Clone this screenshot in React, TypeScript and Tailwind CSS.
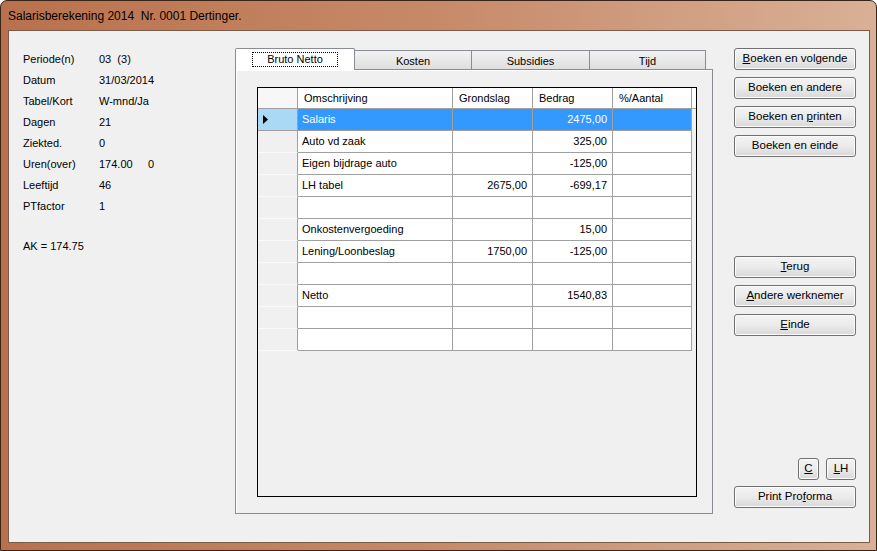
import React from "react";

const font = { fontFamily: '"Liberation Sans", Arial, sans-serif' };

const info: [string, string][] = [
  ["Periode(n)", "03  (3)"],
  ["Datum", "31/03/2014"],
  ["Tabel/Kort", "W-mnd/Ja"],
  ["Dagen", "21"],
  ["Ziekted.", "0"],
  ["Uren(over)", "174.00     0"],
  ["Leeftijd", "46"],
  ["PTfactor", "1"],
];

const rows: [string, string, string, string][] = [
  ["Salaris", "", "2475,00", ""],
  ["Auto vd zaak", "", "325,00", ""],
  ["Eigen bijdrage auto", "", "-125,00", ""],
  ["LH tabel", "2675,00", "-699,17", ""],
  ["", "", "", ""],
  ["Onkostenvergoeding", "", "15,00", ""],
  ["Lening/Loonbeslag", "1750,00", "-125,00", ""],
  ["", "", "", ""],
  ["Netto", "", "1540,83", ""],
  ["", "", "", ""],
  ["", "", "", ""],
];

function Btn({ children, className = "" }: { children: React.ReactNode; className?: string }) {
  return (
    <div
      className={`h-[22px] flex items-center justify-center rounded-[3px] border border-[#707070] bg-gradient-to-b from-[#f3f3f3] via-[#ebebeb] to-[#d8d8d8] text-[11.5px] text-black shadow-[inset_0_0_0_1px_#fcfcfc] ${className}`}
    >
      {children}
    </div>
  );
}

export default function App() {
  return (
    <div
      className="w-[877px] h-[551px] overflow-hidden bg-gradient-to-r from-[#b9714d] via-[#c68a68] to-[#d9b096] rounded-t-[7px] border border-[#3a2418] flex flex-col"
      style={font}
    >
      {/* title bar */}
      <div className="h-[29px] flex items-center pl-[7px] pt-[1px] text-[12px] text-black">
        Salarisberekening 2014&nbsp; Nr. 0001 Dertinger.
      </div>

      {/* client area */}
      <div className="ml-[7px] mr-[6px] h-[513px] bg-[#f0f0f0] border border-[#7a5a48] flex text-[11px] text-black">
        {/* left info */}
        <div className="w-[226px] pl-[14px] pt-[18px]">
          {info.map(([k, v]) => (
            <div key={k} className="flex h-[21px] items-center">
              <span className="w-[76px]">{k}</span>
              <span className="whitespace-pre">{v}</span>
            </div>
          ))}
          <div className="mt-[19px] h-[21px] flex items-center">AK = 174.75</div>
        </div>

        {/* tab control */}
        <div className="w-[478px] shrink-0 pt-[17px] flex flex-col">
          <div className="flex items-end h-[22px]">
            <div className="w-[120px] h-[22px] bg-white border border-b-0 border-[#898c95] rounded-t-[2px] relative z-10 flex items-start justify-center pt-[3px]">
              <span className="px-[14px] border border-dotted border-black leading-[13px]">Bruto Netto</span>
            </div>
            {["Kosten", "Subsidies", "Tijd"].map((t, i) => (
              <div
                key={t}
                className={`h-[20px] ${i === 0 ? "w-[117px]" : i === 1 ? "w-[118px]" : "w-[116px]"} border border-b-0 border-l-0 border-[#898c95] bg-gradient-to-b from-[#f2f2f2] to-[#dedede] flex items-center justify-center pt-[1px]`}
              >
                {t}
              </div>
            ))}
          </div>
          <div className="-mt-[1px] h-[445px] border border-[#898c95] bg-[#f0f0f0] shadow-[inset_1px_1px_0_#ffffff] pl-[21px] pt-[17px]">
            {/* grid */}
            <div className="w-[440px] h-[410px] border border-black bg-[#f0f0f0]">
              <div className="flex h-[21px] bg-white border-b border-[#a0a0a0]">
                <div className="w-[40px] border-r border-[#a0a0a0] bg-[#f7f7f7]" />
                {[
                  ["Omschrijving", "w-[155px]"],
                  ["Grondslag", "w-[80px]"],
                  ["Bedrag", "w-[80px]"],
                  ["%/Aantal", "w-[79px]"],
                ].map(([h, w]) => (
                  <div key={h} className={`${w} border-r border-[#a0a0a0] flex items-center pl-[6px]`}>
                    {h}
                  </div>
                ))}
              </div>
              {rows.map((r, i) => {
                const sel = i === 0;
                return (
                  <div key={i} className="flex h-[22px]">
                    <div
                      className={`w-[40px] border-r border-b border-[#a0a0a0] flex items-center pl-[5px] ${sel ? "bg-[#a9d9f5]" : "bg-[#f0f0f0] border-b-[#fafafa]"}`}
                    >
                      {sel && (
                        <svg width="6" height="9" viewBox="0 0 6 9">
                          <path d="M0 0 L5 4.5 L0 9 Z" fill="#000" />
                        </svg>
                      )}
                    </div>
                    <div className={`w-[155px] border-r border-b border-[#a0a0a0] flex items-center pl-[4px] ${sel ? "bg-[#3399ff] text-white" : "bg-white"}`}>
                      {r[0]}
                    </div>
                    <div className={`w-[80px] border-r border-b border-[#a0a0a0] flex items-center justify-end pr-[5px] ${sel ? "bg-[#3399ff] text-white" : "bg-white"}`}>
                      {r[1]}
                    </div>
                    <div className={`w-[80px] border-r border-b border-[#a0a0a0] flex items-center justify-end pr-[5px] ${sel ? "bg-[#3399ff] text-white" : "bg-white"}`}>
                      {r[2]}
                    </div>
                    <div className={`w-[79px] border-r border-b border-[#a0a0a0] flex items-center ${sel ? "bg-[#3399ff] text-white" : "bg-white"}`}>
                      {r[3]}
                    </div>
                  </div>
                );
              })}
            </div>
          </div>
        </div>

        {/* buttons */}
        <div className="ml-[21px] w-[122px] pt-[17px] flex flex-col">
          <div className="flex flex-col gap-[7px]">
            <Btn><span><span className="underline">B</span>oeken en volgende</span></Btn>
            <Btn>Boeken en andere</Btn>
            <Btn><span>Boeken en <span className="underline">p</span>rinten</span></Btn>
            <Btn>Boeken en einde</Btn>
          </div>
          <div className="mt-[99px] flex flex-col gap-[7px]">
            <Btn><span><span className="underline">T</span>erug</span></Btn>
            <Btn><span><span className="underline">A</span>ndere werknemer</span></Btn>
            <Btn><span><span className="underline">E</span>inde</span></Btn>
          </div>
          <div className="mt-[122px] flex justify-end gap-[7px]">
            <Btn className="w-[21px]"><span className="underline">C</span></Btn>
            <Btn className="w-[30px]"><span><span className="underline">L</span>H</span></Btn>
          </div>
          <Btn className="mt-[6px]"><span>Print Pro<span className="underline">f</span>orma</span></Btn>
        </div>
      </div>
    </div>
  );
}
